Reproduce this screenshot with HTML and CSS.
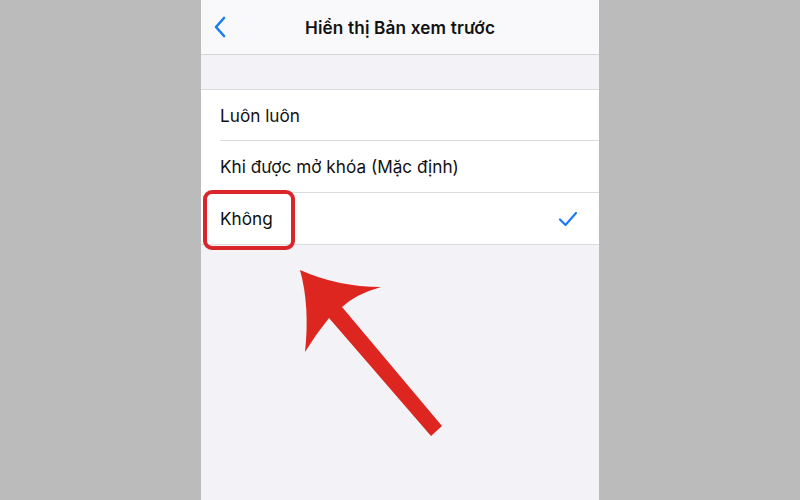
FILE: index.html
```html
<!DOCTYPE html>
<html lang="vi">
<head>
<meta charset="utf-8">
<link rel="stylesheet" href="styles.css">
</head>
<body>
<div class="stage">
  <div class="phone">
    <div class="navbar">
      <svg class="back" width="14" height="22" viewBox="0 0 14 22"><path d="M11 2 L3 11 L11 20" fill="none" stroke="#1a7cf5" stroke-width="2.6" stroke-linecap="round" stroke-linejoin="round"/></svg>
      <div class="title">Hiển thị Bản xem trước</div>
    </div>
    <div class="gap"></div>
    <ul class="list">
      <li class="row"><span>Luôn luôn</span></li>
      <li class="row"><span>Khi được mở khóa (Mặc định)</span></li>
      <li class="row"><span>Không</span>
        <svg class="check" width="20" height="16" viewBox="0 0 20 16"><path d="M2 8.5 L7.5 14 L18 2" fill="none" stroke="#1a7cf5" stroke-width="2.2" stroke-linecap="round" stroke-linejoin="round"/></svg>
      </li>
    </ul>
  </div>
  <div class="highlight"></div>
  <svg class="arrow" width="800" height="500" viewBox="0 0 800 500">
    <path d="M300 270 Q338 287 381 287 Q356 294 342 307 L442 426 L431 436 L329 318 Q316 334 305 352 Q310 306 300 270 Z" fill="#dd2620"/>
  </svg>
</div>
</body>
</html>
```
FILE: styles.css
```css
html, body {
  margin: 0;
  padding: 0;
}
body {
  background: #bbbbbb;
  font-family: Inter, "Noto Sans", sans-serif;
}
.stage {
  position: relative;
  width: 800px;
  height: 500px;
  display: flex;
  justify-content: center;
  overflow: hidden;
}
.phone {
  width: 398px;
  height: 500px;
  background: #f2f2f7;
  display: flex;
  flex-direction: column;
}
.navbar {
  height: 54px;
  background: #f9f9fb;
  border-bottom: 1px solid #d6d6d8;
  display: flex;
  align-items: center;
  position: relative;
}
.back {
  margin-left: 12px;
}
.title {
  position: absolute;
  left: 0;
  right: 0;
  text-align: center;
  font-size: 17.2px;
  font-weight: 600;
  color: #111;
  letter-spacing: 0.15px;
}
.gap {
  height: 34px;
}
.list {
  list-style: none;
  margin: 0;
  padding: 0;
  background: #fff;
  border-top: 1px solid #dcdcdf;
  border-bottom: 1px solid #dcdcdf;
}
.row {
  height: 51px;
  margin-left: 19px;
  padding-right: 21px;
  display: flex;
  align-items: center;
  justify-content: space-between;
  font-size: 17.2px;
  color: #111;
}
.row:first-child {
  height: 50px;
}
.row + .row {
  border-top: 1px solid #dcdcdf;
}
.highlight {
  position: absolute;
  left: 203px;
  top: 190px;
  width: 84px;
  height: 52px;
  border: 4px solid #d9262a;
  border-radius: 9px;
}
.arrow {
  position: absolute;
  left: 0;
  top: 0;
}
```
